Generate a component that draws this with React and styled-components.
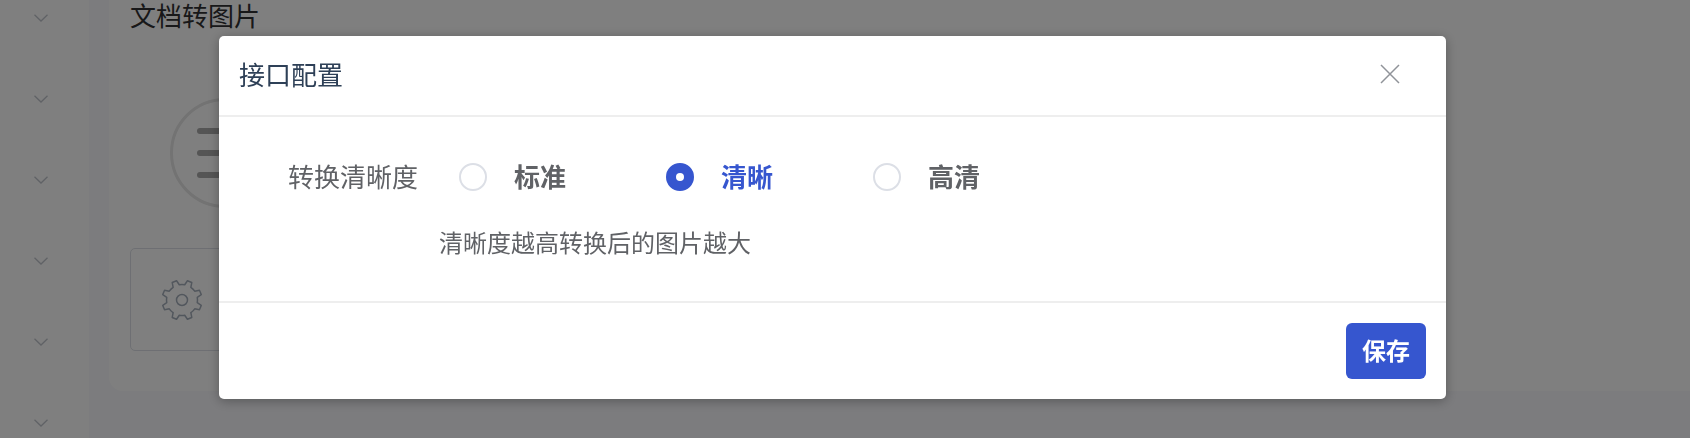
import React from 'react';
import styled, { createGlobalStyle } from 'styled-components';

const FONT = '"Noto Sans CJK SC", "Noto Sans", sans-serif';

const GlobalStyle = createGlobalStyle`
  *, *::before, *::after {
    box-sizing: border-box;
  }
  html, body {
    margin: 0;
    height: 438px;
    overflow: hidden;
    background: #fff;
    font-family: ${FONT};
  }
`;

const Page = styled.div`
  display: flex;
  height: 438px;
  background: #f8f9fc;
`;

const Sidebar = styled.div`
  width: 89px;
  flex: none;
  background: #fff;
  display: flex;
  flex-direction: column;
  align-items: center;
  padding: 14px 7px 0 0;
  gap: 73px;
`;

const Chevron = styled.svg`
  width: 14px;
  height: 8px;
  flex: none;
  display: block;
`;

const Main = styled.div`
  flex: 1;
  padding: 0 0 47px 20px;
  min-width: 0;
`;

const Card = styled.div`
  height: 100%;
  background: #fff;
  border-radius: 0 0 0 14px;
  padding: 0 21px;
`;

const PageTitle = styled.div`
  font-size: 26px;
  line-height: 30px;
  color: #303133;
`;

const Ring = styled.div`
  width: 110px;
  height: 110px;
  margin: 68px 0 0 40px;
  border: 3px solid #e6e6e6;
  border-radius: 50%;
  display: flex;
  flex-direction: column;
  gap: 16px;
  justify-content: center;
`;

const RingBar = styled.div`
  width: 60px;
  height: 6px;
  margin-left: 24px;
  border-radius: 3px;
  background: #aaa;
`;

const ToolBox = styled.div`
  width: 300px;
  height: 103px;
  margin-top: 40px;
  border: 1px solid #dcdfe6;
  border-radius: 5px;
  display: flex;
  align-items: center;
  padding-left: 30px;
`;

const GearIcon = styled.svg`
  width: 42px;
  height: 42px;
  display: block;
`;

const Overlay = styled.div`
  position: fixed;
  inset: 0;
  background: rgba(0, 0, 0, 0.5);
  padding: 36px 0 0 219px;
`;

const Modal = styled.div`
  width: 1227px;
  height: 363px;
  background: #fff;
  border-radius: 5px;
  box-shadow: 0 2px 12px rgba(0, 0, 0, 0.3);
  display: flex;
  flex-direction: column;
`;

const ModalHeader = styled.div`
  height: 81px;
  flex: none;
  border-bottom: 2px solid #eeeeee;
  display: flex;
  align-items: center;
  justify-content: space-between;
  padding: 0 46px 0 20px;
`;

const ModalTitle = styled.div`
  font-size: 26px;
  line-height: 38px;
  padding-bottom: 4px;
  color: #2e4057;
`;

const CloseIcon = styled.svg`
  width: 20px;
  height: 20px;
  display: block;
  margin-bottom: 3px;
`;

const ModalBody = styled.div`
  height: 186px;
  flex: none;
  border-bottom: 2px solid #eeeeee;
  padding: 38px 0 0 69px;
`;

const FormRow = styled.div`
  display: flex;
  align-items: center;
  height: 44px;
`;

const FieldLabel = styled.div`
  width: 171px;
  flex: none;
  font-size: 26px;
  padding-bottom: 4px;
  color: #606266;
`;

const Option = styled.label`
  width: 207px;
  flex: none;
  display: flex;
  align-items: center;
  gap: 27px;
  font-size: 26px;
  font-weight: 700;
  color: ${(p) => (p.$active ? '#3656cf' : '#606266')};
`;

const OptionText = styled.span`
  padding-bottom: 4px;
`;

const RadioDot = styled.span`
  width: 28px;
  height: 28px;
  border-radius: 50%;
  border: 2px solid ${(p) => (p.$active ? '#3656cf' : '#dcdfe6')};
  background: ${(p) => (p.$active ? '#3656cf' : '#fff')};
  display: flex;
  align-items: center;
  justify-content: center;
  &::after {
    content: '';
    width: 8px;
    height: 8px;
    border-radius: 50%;
    background: #fff;
  }
`;

const HelpText = styled.div`
  margin: 26px 0 0 151px;
  font-size: 24px;
  line-height: 34px;
  color: #606266;
`;

const ModalFooter = styled.div`
  flex: 1;
  display: flex;
  justify-content: flex-end;
  padding: 20px 20px 0 0;
`;

const SaveButton = styled.button`
  width: 80px;
  height: 56px;
  border: 0;
  border-radius: 6px;
  background: #3656cf;
  color: #fff;
  font-family: ${FONT};
  font-size: 24px;
  font-weight: 700;
  padding: 0 0 3px;
`;

const OPTIONS = ['标准', '清晰', '高清'];

// gear outline with eight rounded teeth, built once from polar points
const gearPath = (() => {
  const cx = 21;
  const cy = 21;
  const pt = (r, a) => `${(cx + r * Math.cos(a)).toFixed(2)} ${(cy + r * Math.sin(a)).toFixed(2)}`;
  let d = '';
  for (let i = 0; i < 8; i++) {
    const a = (i * Math.PI) / 4 + Math.PI / 8;
    const s = Math.PI / 8;
    d += `${i === 0 ? 'M' : 'L'}${pt(15.5, a - s * 0.55)} `;
    d += `L${pt(20, a - s * 0.3)} L${pt(20, a + s * 0.3)} L${pt(15.5, a + s * 0.55)} `;
    d += `A15.5 15.5 0 0 1 ${pt(15.5, a + s * 1.45)} `;
  }
  return `${d}Z`;
})();

export default function App() {
  return (
    <>
      <GlobalStyle />
      <Page>
        <Sidebar>
          {[0, 1, 2, 3, 4, 5].map((i) => (
            <Chevron key={i} viewBox="0 0 14 8" fill="none" stroke="#c0c4cc" strokeWidth="1.3">
              <polyline points="0.5,0.8 7,7 13.5,0.8" />
            </Chevron>
          ))}
        </Sidebar>
        <Main>
          <Card>
            <PageTitle>文档转图片</PageTitle>
            <Ring>
              <RingBar />
              <RingBar />
              <RingBar />
            </Ring>
            <ToolBox>
              <GearIcon viewBox="0 0 42 42" fill="none" stroke="#a5aebb" strokeWidth="1.5" strokeLinejoin="round">
                <path d={gearPath} />
                <circle cx="21" cy="21" r="5.5" />
              </GearIcon>
            </ToolBox>
          </Card>
        </Main>
      </Page>
      <Overlay>
        <Modal>
          <ModalHeader>
            <ModalTitle>接口配置</ModalTitle>
            <CloseIcon viewBox="0 0 20 20" fill="none" stroke="#909399" strokeWidth="1.5">
              <path d="M1 1 L19 19 M19 1 L1 19" />
            </CloseIcon>
          </ModalHeader>
          <ModalBody>
            <FormRow>
              <FieldLabel>转换清晰度</FieldLabel>
              {OPTIONS.map((o) => (
                <Option key={o} $active={o === '清晰'}>
                  <RadioDot $active={o === '清晰'} />
                  <OptionText>{o}</OptionText>
                </Option>
              ))}
            </FormRow>
            <HelpText>清晰度越高转换后的图片越大</HelpText>
          </ModalBody>
          <ModalFooter>
            <SaveButton>保存</SaveButton>
          </ModalFooter>
        </Modal>
      </Overlay>
    </>
  );
}
